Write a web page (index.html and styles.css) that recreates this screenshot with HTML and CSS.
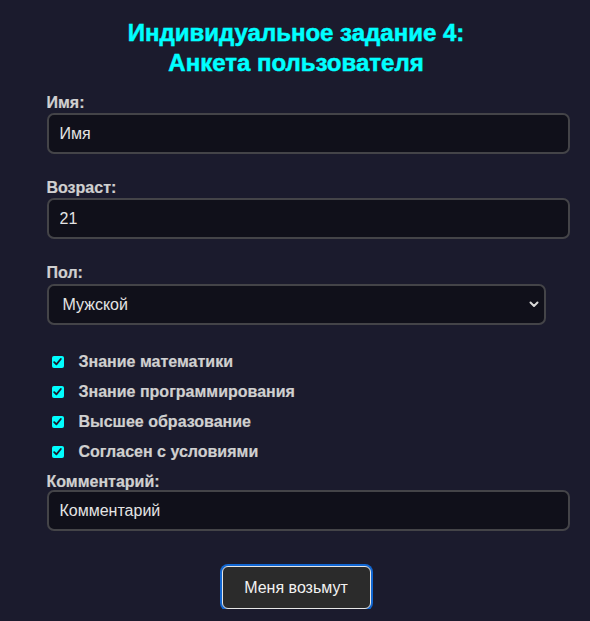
FILE: index.html
```html
<!DOCTYPE html>
<html lang="ru">
<head>
<meta charset="utf-8">
<title>Анкета пользователя</title>
<link rel="stylesheet" href="styles.css">
</head>
<body>
<main class="page">
  <h1 class="title">Индивидуальное задание 4:<br>Анкета пользователя</h1>
  <form class="form">
    <div class="field">
      <label class="label" for="name">Имя:</label>
      <input class="input" id="name" type="text" value="Имя">
    </div>
    <div class="field">
      <label class="label" for="age">Возраст:</label>
      <input class="input" id="age" type="text" value="21">
    </div>
    <div class="field field-select">
      <label class="label" for="sex">Пол:</label>
      <div class="select-wrap">
        <select class="select" id="sex">
          <option>Мужской</option>
          <option>Женский</option>
        </select>
        <svg class="chev" width="10" height="7" viewBox="0 0 10 7"><path d="M1.5 1.5 L5 5 L8.5 1.5" fill="none" stroke="#d8d8d8" stroke-width="2" stroke-linecap="round" stroke-linejoin="round"/></svg>
      </div>
    </div>
    <div class="checks">
      <label class="check"><span class="box"><svg width="9" height="8" viewBox="0 0 9 8"><path d="M1.2 4.2 L3.4 6.4 L7.8 1" fill="none" stroke="#1b1b2b" stroke-width="1.8" stroke-linecap="round" stroke-linejoin="round"/></svg></span>Знание математики</label>
      <label class="check"><span class="box"><svg width="9" height="8" viewBox="0 0 9 8"><path d="M1.2 4.2 L3.4 6.4 L7.8 1" fill="none" stroke="#1b1b2b" stroke-width="1.8" stroke-linecap="round" stroke-linejoin="round"/></svg></span>Знание программирования</label>
      <label class="check"><span class="box"><svg width="9" height="8" viewBox="0 0 9 8"><path d="M1.2 4.2 L3.4 6.4 L7.8 1" fill="none" stroke="#1b1b2b" stroke-width="1.8" stroke-linecap="round" stroke-linejoin="round"/></svg></span>Высшее образование</label>
      <label class="check"><span class="box"><svg width="9" height="8" viewBox="0 0 9 8"><path d="M1.2 4.2 L3.4 6.4 L7.8 1" fill="none" stroke="#1b1b2b" stroke-width="1.8" stroke-linecap="round" stroke-linejoin="round"/></svg></span>Согласен с условиями</label>
    </div>
    <div class="field field-comment">
      <label class="label" for="comment">Комментарий:</label>
      <input class="input" id="comment" type="text" value="Комментарий">
    </div>
    <div class="actions">
      <button class="button" type="button">Меня возьмут</button>
    </div>
  </form>
</main>
</body>
</html>
```

FILE: styles.css
```css
html, body {
  margin: 0;
  padding: 0;
  background: #1b1b2d;
}

body {
  font-family: "Liberation Sans", Arial, sans-serif;
  color: #d0d0d0;
}

.page {
  width: 499px;
  margin: 0 auto;
  padding: 18px 0 0 2px;
}

.title {
  margin: 0 0 16px;
  font-size: 24px;
  line-height: 30px;
  font-weight: 700;
  color: #00ffff;
  text-align: center;
  -webkit-text-stroke: 0.5px #00ffff;
}

.form {
  display: flex;
  flex-direction: column;
}

.field {
  display: flex;
  flex-direction: column;
  margin-bottom: 25px;
}

.label {
  font-size: 16px;
  line-height: 17px;
  font-weight: 700;
  color: #d0d0d0;
  margin-bottom: 2px;
  -webkit-text-stroke: 0.2px #d0d0d0;
}

.input {
  width: 523px;
  box-sizing: border-box;
  height: 41px;
  padding: 0 11px;
  background: #10101a;
  border: 2px solid #444448;
  border-radius: 7px;
  color: #e4e4e4;
  font-family: "Liberation Sans", Arial, sans-serif;
  font-size: 16px;
  outline: none;
}

.field-select {
  margin-bottom: 22px;
}

.field-select .label {
  margin-bottom: 3px;
}

.select-wrap {
  position: relative;
  width: 499px;
}

.select {
  width: 100%;
  height: 41px;
  box-sizing: border-box;
  padding: 0 14px;
  background: #10101a;
  border: 2px solid #444448;
  border-radius: 7px;
  color: #e4e4e4;
  font-family: "Liberation Sans", Arial, sans-serif;
  font-size: 16px;
  appearance: none;
  -webkit-appearance: none;
  outline: none;
}

.chev {
  position: absolute;
  right: 7px;
  top: 17px;
  pointer-events: none;
}

.checks {
  display: flex;
  flex-direction: column;
}

.check {
  display: flex;
  align-items: center;
  height: 30px;
  padding-left: 5px;
  font-size: 16px;
  font-weight: 700;
  color: #d0d0d0;
  -webkit-text-stroke: 0.2px #d0d0d0;
}

.box {
  width: 12px;
  height: 12px;
  border-radius: 2px;
  background: #00ffff;
  display: flex;
  align-items: center;
  justify-content: center;
  margin-right: 15px;
  flex-shrink: 0;
}

.field-comment {
  margin-top: 6px;
  margin-bottom: 0;
}

.field-comment .label {
  margin-bottom: 0;
}

.actions {
  display: flex;
  justify-content: center;
  margin-top: 35px;
}

.button {
  width: 149px;
  height: 43px;
  box-sizing: border-box;
  background: #2b2b2b;
  border: 1px solid #e6e6e6;
  border-radius: 6px;
  box-shadow: 0 0 0 2px #1267d2;
  color: #f2f2f2;
  font-family: "Liberation Sans", Arial, sans-serif;
  font-size: 16px;
}
```
